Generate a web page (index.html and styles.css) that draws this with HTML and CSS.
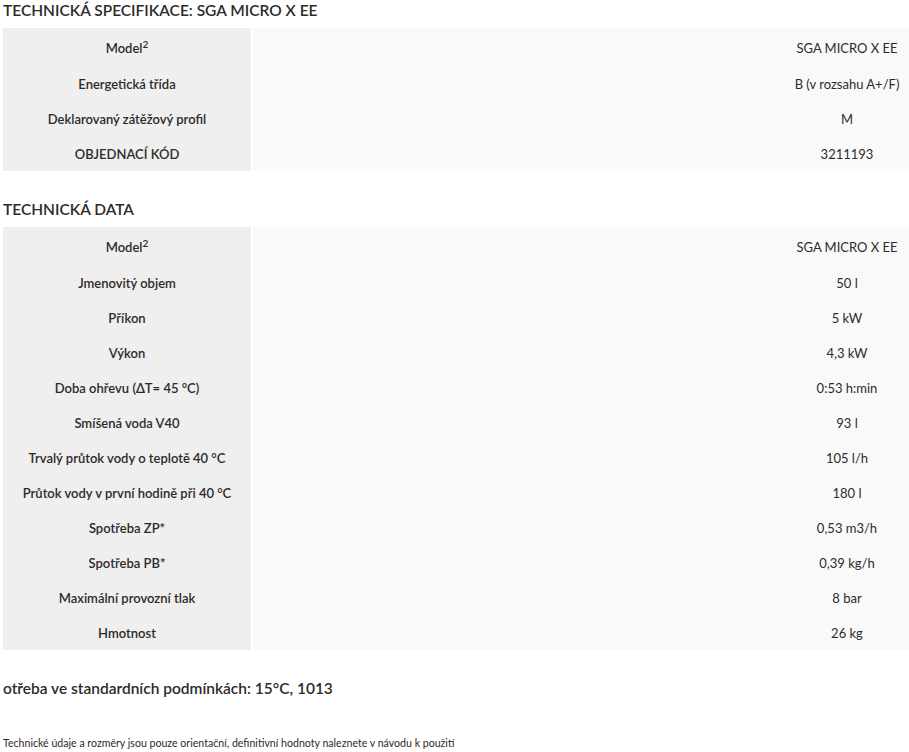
FILE: index.html
```html
<html>
    <head>
        <link rel="stylesheet" href="styles.css">
    </head>
    <body>
        <h2>TECHNICKÁ SPECIFIKACE: SGA MICRO X EE</h2>
        <table class="spec">
            <tr class="first"><td class="key">Model<sup>2</sup></td><td class="val">SGA MICRO X EE</td></tr>
            <tr><td class="key">Energetická třída</td><td class="val">B (v rozsahu A+/F)</td></tr>
            <tr><td class="key">Deklarovaný zátěžový profil</td><td class="val">M</td></tr>
            <tr><td class="key">OBJEDNACÍ KÓD</td><td class="val">3211193</td></tr>
        </table>

        <h2 class="next">TECHNICKÁ DATA</h2>
        <table class="spec">
            <tr class="first"><td class="key">Model<sup>2</sup></td><td class="val">SGA MICRO X EE</td></tr>
            <tr><td class="key">Jmenovitý objem</td><td class="val">50 l</td></tr>
            <tr><td class="key">Příkon</td><td class="val">5 kW</td></tr>
            <tr><td class="key">Výkon</td><td class="val">4,3 kW</td></tr>
            <tr><td class="key">Doba ohřevu (ΔT= 45 °C)</td><td class="val">0:53 h:min</td></tr>
            <tr><td class="key">Smíšená voda V40</td><td class="val">93 l</td></tr>
            <tr><td class="key">Trvalý průtok vody o teplotě 40 °C</td><td class="val">105 l/h</td></tr>
            <tr><td class="key">Průtok vody v první hodině při 40 °C</td><td class="val">180 l</td></tr>
            <tr><td class="key">Spotřeba ZP*</td><td class="val">0,53 m3/h</td></tr>
            <tr><td class="key">Spotřeba PB*</td><td class="val">0,39 kg/h</td></tr>
            <tr><td class="key">Maximální provozní tlak</td><td class="val">8 bar</td></tr>
            <tr><td class="key">Hmotnost</td><td class="val">26 kg</td></tr>
        </table>

        <h2 class="next">otřeba ve standardních podmínkách: 15°C, 1013</h2>

        <p class="note">Technické údaje a rozměry jsou pouze orientační, definitivní hodnoty naleznete v návodu k použití</p>
    </body>
</html>
```

FILE: styles.css
```css
html {
    overflow: hidden;
}
body {
    margin: 0;
    padding: 0 3px;
    font-family: Lato, "Open Sans", sans-serif;
    color: #2e2a2a;
    background: #ffffff;
}
h2 {
    margin: 0 0 8px 0;
    font-size: 15.5px;
    line-height: 20px;
    font-weight: 600;
    white-space: nowrap;
}
h2.next {
    margin-top: 28px;
}
.spec {
    width: 1438px;
    border-collapse: collapse;
    font-size: 13px;
}
.spec td {
    height: 35px;
    padding: 0;
    text-align: center;
    vertical-align: middle;
}
.spec .first td {
    height: 38px;
    padding-top: 1px;
}
.key {
    width: 248px;
    background: #efefef;
    border-right: 2px solid #ffffff;
    font-weight: 600;
}
.val {
    background: #f9f9f9;
}
sup {
    font-size: 10px;
    line-height: 0;
}
.note {
    margin: 39px 0 0 0;
    font-size: 10.6px;
    line-height: 12px;
}
```
